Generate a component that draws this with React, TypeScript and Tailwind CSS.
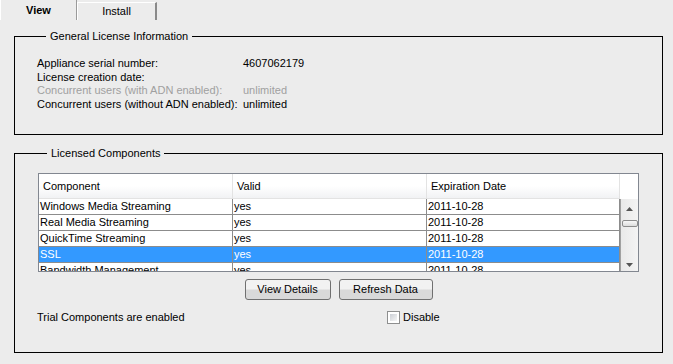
import React from "react";

const rows = [
  { name: "Windows Media Streaming", valid: "yes", date: "2011-10-28" },
  { name: "Real Media Streaming", valid: "yes", date: "2011-10-28" },
  { name: "QuickTime Streaming", valid: "yes", date: "2011-10-28" },
  { name: "SSL", valid: "yes", date: "2011-10-28", selected: true },
  { name: "Bandwidth Management", valid: "yes", date: "2011-10-28" },
];

const info = [
  { label: "Appliance serial number:", value: "4607062179" },
  { label: "License creation date:", value: "" },
  { label: "Concurrent users (with ADN enabled):", value: "unlimited", dim: true },
  { label: "Concurrent users (without ADN enabled):", value: "unlimited" },
];

function Scrollbar() {
  return (
    <div className="w-[18px] border-l border-[#a0a0a0] bg-gradient-to-r from-[#e9e9e9] to-[#f4f4f4] flex flex-col items-center">
      {/* up arrow */}
      <svg width="7" height="4" viewBox="0 0 7 4" className="mt-[8px]">
        <path d="M0 4 L3.5 0 L7 4 Z" fill="#555" />
      </svg>
      {/* thumb */}
      <div className="mt-[9px] w-[16px] h-[7px] rounded-[2px] border border-[#8c8c8c] bg-gradient-to-b from-[#f8f8f8] to-[#dcdcdc]" />
      <div className="flex-1" />
      <svg width="7" height="4" viewBox="0 0 7 4" className="mb-[4px]">
        <path d="M0 0 L7 0 L3.5 4 Z" fill="#555" />
      </svg>
    </div>
  );
}

export default function App() {
  return (
    <div className="w-[673px] h-[364px] bg-[#ececec] font-['Liberation_Sans',Arial,sans-serif] text-[11px] text-black overflow-hidden">
      {/* Tabs */}
      <div className="flex h-[20px] items-end">
        <div className="w-[77px] h-[20px] border-l border-white border-r border-r-[#9a9a9a] flex items-center justify-center font-bold">
          View
        </div>
        <div className="w-[80px] h-[18px] border-t border-l border-white border-r-2 border-r-[#8a8a8a] flex items-center justify-center">
          Install
        </div>
      </div>

      {/* General License Information */}
      <fieldset className="ml-[14px] mt-[10px] w-[649px] h-[105px] border border-black pl-[22px]">
        <legend className="ml-[9px] px-[4px] leading-[13px]">General License Information</legend>
        <div className="pt-[14px]">
          {info.map((r) => (
            <div key={r.label} className={`flex leading-[13.5px] ${r.dim ? "text-[#a0a0a0]" : ""}`}>
              <span className="w-[206px]">{r.label}</span>
              <span>{r.value}</span>
            </div>
          ))}
        </div>
      </fieldset>

      {/* Licensed Components */}
      <fieldset className="ml-[14px] mt-[12px] w-[649px] h-[206px] border border-black pl-[23px]">
        <legend className="ml-[9px] px-[4px] leading-[13px]">Licensed Components</legend>
        <div className="pt-[13px]">
          <div className="w-[601px] h-[99px] border border-[#828790] bg-white flex flex-col overflow-hidden">
            {/* header */}
            <div className="flex h-[25px] shrink-0">
              {["Component", "Valid", "Expiration Date"].map((h, i) => (
                <div
                  key={h}
                  className={`${i === 2 ? "w-[193px]" : "w-[194px]"} h-[25px] border-r border-b border-[#e3e3e3] bg-gradient-to-b from-white from-50% to-[#f1f2f4] flex items-center pl-[4px] pt-[1px]`}
                >
                  {h}
                </div>
              ))}
              <div className="w-[18px] h-[25px] bg-white" />
            </div>
            {/* body */}
            <div className="flex flex-1 min-h-0">
              <div className="w-[581px] overflow-hidden">
                {rows.map((r) => (
                  <div
                    key={r.name}
                    className={`flex h-[16px] border-b border-[#8c8c8c] leading-[15px] ${r.selected ? "bg-[#3399ff] text-white" : ""}`}
                  >
                    <div className="w-[194px] border-r border-[#8c8c8c] pl-[1px] whitespace-nowrap">{r.name}</div>
                    <div className="w-[194px] border-r border-[#8c8c8c] pl-[1px]">{r.valid}</div>
                    <div className="w-[193px] border-r border-[#8c8c8c] pl-[1px]">{r.date}</div>
                  </div>
                ))}
              </div>
              <Scrollbar />
            </div>
          </div>

          {/* buttons */}
          <div className="w-[601px] flex justify-center gap-[8px] mt-[7px]">
            <button className="w-[86px] h-[21px] rounded-[3px] border border-[#707070] bg-gradient-to-b from-[#f2f2f2] from-45% to-[#d9d9d9] to-55%">
              View Details
            </button>
            <button className="w-[94px] h-[21px] rounded-[3px] border border-[#707070] bg-gradient-to-b from-[#f2f2f2] from-45% to-[#d9d9d9] to-55%">
              Refresh Data
            </button>
          </div>

          {/* trial row */}
          <div className="flex items-center mt-[11px] -ml-[1px] leading-[13px]">
            <span className="w-[350px]">Trial Components are enabled</span>
            <span className="w-[13px] h-[13px] border border-[#8e8f8f] bg-white p-[2px]">
              <span className="block w-full h-full bg-gradient-to-br from-[#cbcfd5] to-[#f6f6f6]" />
            </span>
            <span className="ml-[3px]">Disable</span>
          </div>
        </div>
      </fieldset>
    </div>
  );
}
